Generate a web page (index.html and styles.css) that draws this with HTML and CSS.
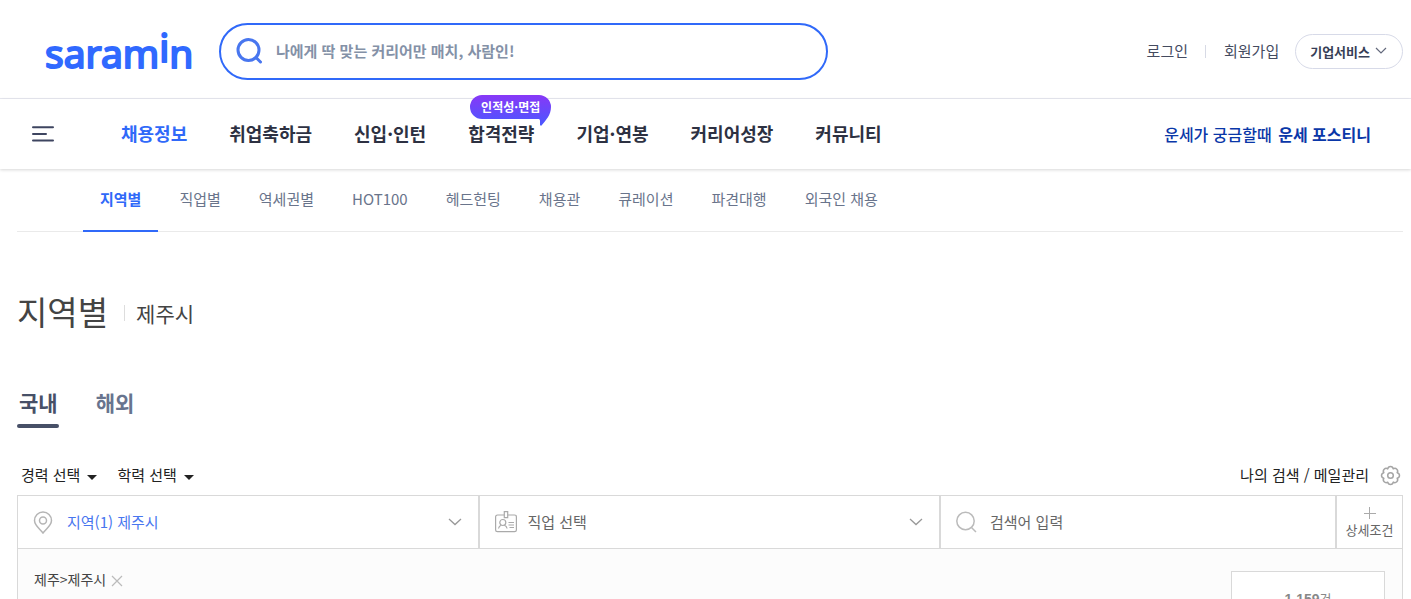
FILE: index.html
```html
<!DOCTYPE html>
<html lang="ko">
<head>
<meta charset="utf-8">
<meta name="viewport" content="width=device-width, initial-scale=1">
<title>지역별 - 제주시</title>
<link rel="stylesheet" href="styles.css">
</head>
<body>
<div class="page">
  <header class="top">
    <a class="logo" href="#" aria-label="saramin">
      <svg width="150" height="42" viewBox="0 0 150 42"><text class="logo-text" x="0" y="38">saram<tspan dy="-6">i</tspan><tspan dy="6">n</tspan></text></svg>
    </a>
    <form class="search">
      <button class="search-btn" type="button" aria-label="검색">
        <svg width="28" height="26" viewBox="0 0 28 26" fill="none" stroke="#4876ef" stroke-width="3" stroke-linecap="round"><circle cx="12.500" cy="12" r="10.5"/><path d="M20 19.500l4.500 4.500"/></svg>
      </button>
      <input class="search-input" type="text" aria-label="검색어" placeholder="나에게 딱 맞는 커리어만 매치, 사람인!">
    </form>
    <div class="account">
      <a class="account-link" href="#">로그인</a>
      <span class="account-bar"></span>
      <a class="account-link" href="#">회원가입</a>
      <button class="company" type="button">기업서비스<svg width="12" height="8" viewBox="0 0 12 8" fill="none" stroke="#63697c" stroke-width="1.200"><path d="M1 1l5 5 5-5"/></svg></button>
    </div>
  </header>
  <nav class="gnb">
    <button class="menu-btn" type="button" aria-label="전체메뉴">
      <svg width="22" height="17" viewBox="0 0 22 17" stroke="#3e4560" stroke-width="2" stroke-linecap="round"><path d="M1 1.200h20M1 8h13M1 14.500h20"/></svg>
    </button>
    <ul class="gnb-list">
      <li><a class="gnb-link active" href="#">채용정보</a></li>
      <li><a class="gnb-link" href="#">취업축하금</a></li>
      <li><a class="gnb-link" href="#">신입·인턴</a></li>
      <li class="has-badge"><a class="gnb-link" href="#">합격전략</a>
        <span class="badge"><svg class="badge-shape" width="81" height="31" viewBox="0 0 81 31"><defs><linearGradient id="badge-fill" x1="0" y1="0" x2="0" y2="1"><stop offset="0" stop-color="#8838f7"/><stop offset="1" stop-color="#4a58ff"/></linearGradient></defs><path fill="url(#badge-fill)" d="M12 0h57a12 12 0 0 1 12 12c0 8-5 13-9.500 18.500-.8.500-1.500 0-1.500-1V26c0-1.500-.5-2-2-2H12a12 12 0 0 1 0-24z"/></svg><span class="badge-text">인적성·면접</span></span></li>
      <li><a class="gnb-link" href="#">기업·연봉</a></li>
      <li><a class="gnb-link" href="#">커리어성장</a></li>
      <li><a class="gnb-link" href="#">커뮤니티</a></li>
    </ul>
    <a class="promo" href="#">운세가 궁금할때 <strong class="promo-strong">운세 포스티니</strong></a>
  </nav>
  <main class="content">
    <ul class="subnav">
      <li><a class="sub-link active" href="#">지역별</a></li>
      <li><a class="sub-link" href="#">직업별</a></li>
      <li><a class="sub-link" href="#">역세권별</a></li>
      <li><a class="sub-link" href="#">HOT100</a></li>
      <li><a class="sub-link" href="#">헤드헌팅</a></li>
      <li><a class="sub-link" href="#">채용관</a></li>
      <li><a class="sub-link" href="#">큐레이션</a></li>
      <li><a class="sub-link" href="#">파견대행</a></li>
      <li><a class="sub-link" href="#">외국인 채용</a></li>
    </ul>
    <div class="heading">
      <h1 class="title">지역별</h1>
      <span class="title-bar"></span>
      <span class="subtitle">제주시</span>
    </div>
    <div class="tabs">
      <button class="tab active" type="button">국내</button>
      <button class="tab" type="button">해외</button>
    </div>
    <div class="filters">
      <button class="filter" type="button">경력 선택<span class="caret"></span></button>
      <button class="filter" type="button">학력 선택<span class="caret"></span></button>
      <a class="manage" href="#">나의 검색 / 메일관리
        <svg width="21" height="21" viewBox="0 0 21 21" fill="none" stroke="#a5a5a5" stroke-width="1.500" stroke-linejoin="round"><path d="M17.150 7.740A2.800 2.800 0 0 1 17.150 13.260A2.800 2.800 0 0 1 13.260 17.150A2.800 2.800 0 0 1 7.740 17.150A2.800 2.800 0 0 1 3.850 13.260A2.800 2.800 0 0 1 3.850 7.740A2.800 2.800 0 0 1 7.740 3.850A2.800 2.800 0 0 1 13.260 3.850A2.800 2.800 0 0 1 17.150 7.740z"/><circle cx="10.500" cy="10.500" r="2.800"/></svg>
      </a>
    </div>
    <section class="panel">
      <div class="panel-row">
        <button class="cell region" type="button">
          <svg class="cell-icon" width="20" height="24" viewBox="0 0 20 24" fill="none" stroke="#b5b5b5" stroke-width="1.500"><path d="M10 23C7 19 1.500 15.500 1.500 10.500a8.500 8.500 0 0 1 17 0C18.500 15.500 13 19 10 23z"/><circle cx="10" cy="10.500" r="3.500"/></svg>
          지역(1) 제주시
          <svg class="chev" width="14" height="8" viewBox="0 0 14 8" fill="none" stroke="#999" stroke-width="1.300"><path d="M1 1l6 5.500L13 1"/></svg>
        </button>
        <button class="cell job" type="button">
          <svg class="cell-icon" width="22" height="22" viewBox="0 0 22 22" fill="none" stroke="#aaa" stroke-width="1.200"><path d="M9 4H2.500Q.6 4 .6 6v13q0 1.700 1.900 1.700h17q1.900 0 1.900-1.700V6q0-2-1.900-2H13"/><path d="M9.300.6h3.400v6H9.300z"/><circle cx="7.800" cy="11.500" r="3"/><path d="M3.500 17.500q.5-2.500 2.800-3.200M9.300 14.300q2.300.7 2.800 3.200M13.500 11.500H19M13.500 14H19M14.500 16.500H19"/></svg>
          직업 선택
          <svg class="chev" width="14" height="8" viewBox="0 0 14 8" fill="none" stroke="#999" stroke-width="1.300"><path d="M1 1l6 5.500L13 1"/></svg>
        </button>
        <label class="cell keyword">
          <svg class="cell-icon" width="21" height="22" viewBox="0 0 21 22" fill="none" stroke="#bbb" stroke-width="1.500"><circle cx="9.500" cy="10" r="8.700"/><path d="M15.500 16.500l4.500 4.500"/></svg>
          <input class="keyword-input" type="text" aria-label="검색어 입력" placeholder="검색어 입력">
        </label>
        <button class="cell detail" type="button">
          <svg width="12" height="12" viewBox="0 0 12 12" stroke="#aaa" stroke-width="1"><path d="M0 6.500h12M5.500 0v12"/></svg>
          상세조건
        </button>
      </div>
      <div class="selected">
        <span class="chip">제주&gt;제주시<button class="chip-x" type="button" aria-label="삭제"><svg width="12" height="12" viewBox="0 0 12 12" stroke="#bbb" stroke-width="1.200"><path d="M1 1l10 10M11 1L1 11"/></svg></button></span>
        <button class="count" type="button"><strong class="count-num">1,159</strong>건</button>
      </div>
    </section>
  </main>
</div>
</body>
</html>
```
FILE: styles.css
```css
* { box-sizing: border-box; }
body { margin: 0; background: #fff; color: #222; }
body, button, input { font-family: "Noto Sans CJK KR", "Noto Sans", sans-serif; }
button { margin: 0; padding: 0; border: 0; background: none; color: inherit; cursor: pointer; }
a { color: inherit; text-decoration: none; }
ul { margin: 0; padding: 0; list-style: none; }
svg { display: block; flex: none; }

.page { height: 100vh; overflow: hidden; }

.top { display: flex; align-items: center; height: 99px; padding: 4px 8px 0 45px; border-bottom: 1px solid #e8e9f1; }
.logo { margin-right: 24px; }
.logo svg { overflow: visible; }
.logo-text { font: 400 39px "Noto Sans", sans-serif; fill: #3069ff; stroke: #3069ff; stroke-width: 2; stroke-linejoin: round; }
.search { display: flex; align-items: center; flex: 0 1 609px; height: 57px; padding: 0 15px; border: 2px solid #3069f9; border-radius: 29px; }
.search-btn { margin-right: 12px; }
.search-input { flex: 1; min-width: 0; padding: 0 0 1px; border: 0; outline: 0; background: none; font-size: 15px; font-weight: 700; line-height: 24px; }
.search-input::placeholder { color: #8491a7; opacity: 1; }
.account { display: flex; align-items: center; margin-left: auto; }
.account-link { padding-bottom: 1px; color: #444b5f; font-size: 15px; line-height: 24px; white-space: nowrap; }
.account-bar { width: 1px; height: 13px; margin: 0 18px 0 17px; background: #d7dae5; }
.company { display: flex; align-items: center; gap: 5px; height: 35px; margin-left: 16px; padding: 0 15px 0 14px; border: 1px solid #d7dae8; border-radius: 18px; color: #373f57; font-size: 13px; font-weight: 700; white-space: nowrap; }

.gnb { display: flex; align-items: center; height: 70px; padding: 0 40px 0 32px; box-shadow: 0 1px 3px rgba(0, 0, 0, 0.16); }
.gnb-list { display: flex; gap: 42px; margin-left: 67px; padding-bottom: 2px; }
.gnb-link { display: block; color: #2d3142; font-size: 18px; font-weight: 700; line-height: 28px; white-space: nowrap; }
.gnb-link.active { color: #3069f9; }
.has-badge { position: relative; }
.badge { position: absolute; left: 2px; top: -24px; width: 81px; height: 31px; }
.badge-text { position: absolute; left: 0; right: 0; top: 0; color: #fff; font-size: 12px; font-weight: 700; line-height: 24px; text-align: center; }
.promo { margin-left: auto; color: #0a37a8; font-size: 16px; font-weight: 500; line-height: 24px; white-space: nowrap; }
.promo-strong { margin-left: 2px; font-weight: 700; }

.content { padding: 0 8px 0 17px; }
.subnav { display: flex; gap: 4px; height: 63px; padding-left: 66px; border-bottom: 1px solid #eaeaea; }
.sub-link { display: block; height: 63px; padding: 18px 17px 0; color: #69748b; font-size: 15px; line-height: 24px; white-space: nowrap; }
.sub-link.active { border-bottom: 2px solid #3069f9; color: #3069f9; font-weight: 700; }

.heading { display: flex; align-items: center; margin-top: 55px; color: #444; }
.title { margin: 0; font-size: 33px; font-weight: 400; line-height: 48px; }
.title-bar { width: 1px; height: 16px; margin: 4px 11px 0 16px; background: #ddd; }
.subtitle { font-size: 21px; line-height: 32px; margin-top: 4px; }

.tabs { display: flex; gap: 35px; margin-top: 53px; }
.tab { position: relative; height: 40px; padding: 0 1px 12px 2px; color: #68748e; font-size: 21px; font-weight: 700; line-height: 28px; }
.tab.active { color: #475067; }
.tab.active::after { content: ""; position: absolute; left: 0; right: 0; bottom: 0; height: 4px; border-radius: 2px; background: #475067; }

.filters { display: flex; align-items: center; gap: 20px; margin-top: 35px; padding: 0 2px 8px 4px; }
.filter { display: flex; align-items: center; gap: 7px; font-size: 15px; line-height: 24px; white-space: nowrap; }
.caret { margin-top: 4px; border: 5px solid transparent; border-top-color: #222; border-bottom: 0; }
.manage { display: flex; align-items: center; gap: 11px; margin-left: auto; font-size: 15px; line-height: 24px; }

.panel { border: 1px solid #d9d9d9; background: #fcfcfc; }
.panel-row { display: grid; grid-template-columns: 1fr 1fr 396px 65px; height: 53px; border-bottom: 1px solid #d9d9d9; background: #fff; }
.cell { display: flex; align-items: center; min-width: 0; padding: 0 16px 1px 15px; border-right: 2px solid #d9d9d9; color: #666; font-size: 15px; line-height: 24px; }
.region { color: #4876ef; }
.region .cell-icon { margin-right: 14px; }
.job .cell-icon { margin-right: 11px; }
.keyword .cell-icon { margin-right: 13px; }
.chev { margin-left: auto; }
.keyword-input { flex: 1; min-width: 0; padding: 0; border: 0; outline: 0; background: none; font-size: 15px; line-height: 24px; }
.keyword-input::placeholder { color: #666; opacity: 1; }
.detail { flex-direction: column; justify-content: center; gap: 1px; padding: 2px 0 0; border-right: 0; font-size: 13px; line-height: 20px; white-space: nowrap; }
.selected { display: flex; align-items: flex-start; justify-content: space-between; padding: 22px 17px 22px 16px; }
.chip { display: flex; align-items: center; gap: 5px; margin-top: -2px; color: #444; font-size: 14px; line-height: 20px; }
.chip-x { padding-top: 3px; }
.count { width: 154px; height: 54px; border: 1px solid #d9d9d9; background: #fff; color: #888; font-size: 13px; }
.count-num { font-family: "Liberation Sans", sans-serif; font-size: 14px; font-weight: 700; }
```
